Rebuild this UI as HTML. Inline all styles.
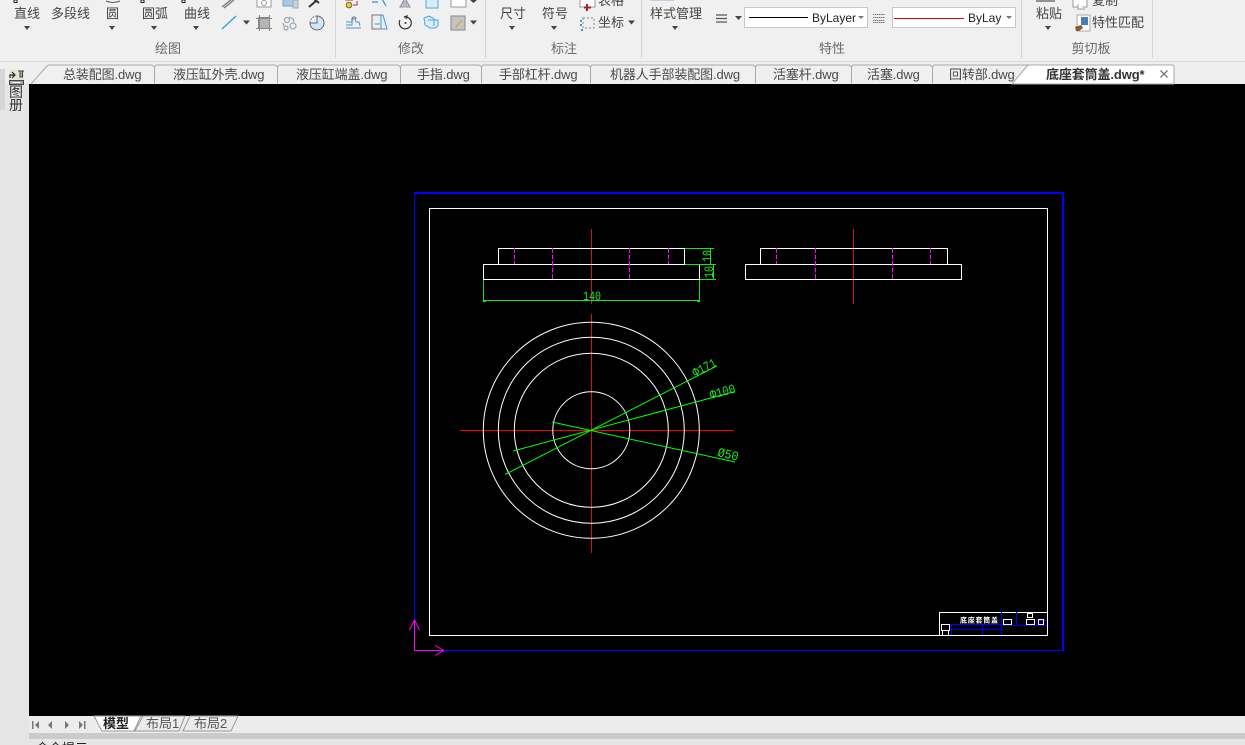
<!DOCTYPE html>
<html><head><meta charset="utf-8">
<style>
html,body{margin:0;padding:0;width:1245px;height:745px;overflow:hidden;background:#e6e6e6}
body{position:relative;font-family:"Liberation Sans","Noto Sans CJK SC",sans-serif;font-size:13px;color:#444}
.t{position:absolute;height:20px;line-height:20px;white-space:nowrap}
.c{transform:translateX(-50%)}
.lab{color:#6a6a6a}
.ar{position:absolute;width:0;height:0;border-left:3.5px solid transparent;border-right:3.5px solid transparent;border-top:4px solid #444}
.tab{position:absolute;top:74px;margin-top:-9.5px;height:20px;line-height:20px;white-space:nowrap;color:#4a4a4a;letter-spacing:-.12px}
svg{position:absolute;left:0;top:0}
.dd{position:absolute;top:7px;height:19px;background:#fff;border:1px solid #c8c8c8;overflow:hidden}
.b{position:absolute;background:#0000ff}
</style></head><body>
<div style="position:absolute;left:0;top:0;width:1245px;height:61px;background:#f0f0f0"></div>
<div style="position:absolute;left:0;top:61px;width:1245px;height:23px;background:#efefef;border-top:1px solid #dcdcdc;box-sizing:border-box"></div>
<div style="position:absolute;left:0;top:69px;width:5px;height:41px;background:#d6d6d6"></div>
<div style="position:absolute;left:29px;top:84px;width:1216px;height:632px;background:#000"></div>
<div style="position:absolute;left:29px;top:716px;width:1216px;height:17px;background:#ececec"></div>
<div style="position:absolute;left:29px;top:733px;width:1216px;height:6px;background:#cbcbcb"></div>

<!-- ribbon dividers and icons -->
<svg width="1245" height="120" viewBox="0 0 1245 120" fill="none">
<g stroke="#d4d4d4"><path d="M335.500 0V58M485.500 0V58M641.500 0V58M1021.500 0V58M1152.500 0V58"/></g>
<g fill="#fff" stroke="#222"><rect x="14" y="0" width="3" height="2.500"/><rect x="141" y="0" width="3" height="2.500"/><rect x="182" y="0" width="3" height="2.500"/></g>
<path d="M106 1Q113 4 120 1" stroke="#555"/>
<path d="M222 7L232 -1M224 8L234 0" stroke="#777" stroke-width="1.300"/>
<path d="M222 29L236 16" stroke="#3aa5e0" stroke-width="1.500"/>
<path d="M243 20.500h7l-3.500 4z" fill="#444"/>
<rect x="258.500" y="17.500" width="11" height="11" fill="#b5b5b5" stroke="#888"/>
<path d="M256 18.500h16M256 28.500h16M259.500 15v16M269.500 15v16" stroke="#888"/>
<rect x="257" y="-2" width="14" height="9" fill="#fff" stroke="#999"/><circle cx="264" cy="3" r="2.500" stroke="#999"/>
<rect x="283" y="-2" width="14" height="8" fill="#a9c8e6" stroke="#7a9fc5"/><rect x="293" y="0" width="5" height="8" fill="#c9d3dc" stroke="#9aaaba"/>
<path d="M309 7L316 1M314 -1L319 3" stroke="#333" stroke-width="2"/>
<g stroke="#9aa4ae" stroke-width="1.200"><circle cx="287" cy="20" r="2.500"/><circle cx="293" cy="26" r="3"/><circle cx="286" cy="28" r="2"/><path d="M289 17l4 2 1 3M283 23l1 3"/></g>
<path d="M317 16a7 7 0 1 1-7 7h7z" fill="#cfe8f8" stroke="#666"/><path d="M310 23a7 7 0 0 1 7-7" stroke="#777" stroke-dasharray="2 1"/>
<circle cx="349" cy="5" r="2.800" fill="#f2d500" stroke="#666"/><path d="M353 5h4V1M345 0h8" stroke="#a04030"/>
<path d="M372 2h6M382 -1l4 7" stroke="#3a8fd0" stroke-width="1.200"/>
<path d="M400 7l4-7v7zM406 0l4 7h-4z" fill="#c9d3dc" stroke="#889"/>
<path d="M346 28h15M346 25h6v-6h3l1 3h3l1 4M346 22h5" stroke="#4a95d0"/><path d="M352 23v-4a2 2 0 0 1 4 0" stroke="#666"/>
<rect x="372" y="15" width="9" height="14" fill="#ececec" stroke="#777"/><path d="M381 15h2l4 14h-6zM375 24h5" stroke="#4a95d0" fill="#e3f2fb"/>
<path d="M400 20a6 6 0 1 0 4-3l3-1-1 3" stroke="#333" stroke-width="1.200"/><circle cx="405.500" cy="23" r="1" fill="#333"/>
<path d="M424 18l5-2 4 2 2 2h3v6l-3 2-5 0-5-3zM428 20h6v6" stroke="#4aa5e0" fill="#dcedf8"/>
<rect x="426" y="-2" width="12" height="10" fill="#d7ecfa" stroke="#5aa5da"/>
<rect x="451" y="-2" width="15" height="9" fill="#fff" stroke="#999"/>
<rect x="451" y="16" width="14" height="14" fill="#c4c4c4" stroke="#888"/><path d="M455 27l6-7 1 1-6 7z" fill="#e8a03a"/>
<path d="M470 20.500h7l-3.500 4z" fill="#444"/><path d="M470 0h7l-3.500 3z" fill="#444"/>
<rect x="580" y="-2" width="15" height="9" fill="#fff" stroke="#999"/><path d="M587 4v7M584 7.500h7" stroke="#b02020" stroke-width="2"/>
<rect x="583" y="18" width="11" height="10" stroke="#888" stroke-dasharray="2 2"/><path d="M581 20v8M581 30h2" stroke="#3a95d0" stroke-width="2" stroke-dasharray="2 2"/>
<path d="M628 20.500h7l-3.500 4z" fill="#444"/>
<path d="M716 15h11M716 18.500h11M716 22h11" stroke="#555" stroke-width="1.200"/>
<path d="M735 16h7l-3.500 4z" fill="#444"/>
<g stroke="#777"><path d="M873 14.500h12M873 17.500h12M873 20.500h12M873 22.500h12" stroke-dasharray="1.500 .5"/></g>
<path d="M650 0h24" stroke="#8fb0cc"/>
<path d="M1036 1h19" stroke="#333"/><rect x="1073" y="-2" width="14" height="9" fill="#fff" stroke="#999"/><path d="M1078 4v5h7" stroke="#999" fill="#fff"/>
<rect x="1077" y="15" width="13" height="16" fill="#fff" stroke="#aaa"/><rect x="1081" y="17" width="7" height="8" fill="#4a7db5"/><path d="M1075 27l6-2 2 3-4 3h-3z" fill="#8a5a2a"/>
<!-- sidebar icon -->
<rect x="9" y="70" width="15" height="15" fill="#e4e4da"/>
<path d="M10 78v-3h4M12 72l3 3-3 3" stroke="#222" stroke-width="1.200"/>
<path d="M18 71h6M20 71h2.500v6H20z" stroke="#444" fill="#aaa"/>
<rect x="9.500" y="80.500" width="14" height="4" fill="#aaa" stroke="#444"/><path d="M12 82.500h8" stroke="#fff"/>
<!-- tabs outline -->
<g stroke="#a8a8a8" fill="#f0f0f0">
<path d="M31 84L47 66Q48 65 50 65H152L154.500 67V83.500"/>
<path d="M154.500 67L156 65H275L277.500 67V83.500"/>
<path d="M277.500 67L279 65H398L400.500 67V83.500"/>
<path d="M400.500 67L402 65H479L481.500 67V83.500"/>
<path d="M481.500 67L483 65H588L590.500 67V83.500"/>
<path d="M590.500 67L592 65H753L755.500 67V83.500"/>
<path d="M755.500 67L757 65H849L851.500 67V83.500"/>
<path d="M851.500 67L853 65H930L932.500 67V83.500"/>
<path d="M932.500 67L934 65H1030"/>
</g>
<path d="M1012 84L1027 66Q1028 65 1030 65H1172Q1174 65 1174 67V84Z" fill="#fff" stroke="#a8a8a8"/>
<path d="M1160.500 70.500l7 7M1167.500 70.500l-7 7" stroke="#777" stroke-width="1.300"/>
</svg>

<!-- ribbon text -->
<span class="t" style="left:14px;top:3.500px">直线</span>
<span class="t" style="left:51px;top:3.500px">多段线</span>
<span class="t" style="left:106px;top:3.500px">圆</span>
<span class="t" style="left:142px;top:3.500px">圆弧</span>
<span class="t" style="left:184px;top:3.500px">曲线</span>
<span class="t" style="left:500px;top:3.500px">尺寸</span>
<span class="t" style="left:542px;top:3.500px">符号</span>
<span class="t" style="left:598px;top:12.500px">坐标</span>
<span class="t" style="left:598px;top:-9px">表格</span>
<span class="t" style="left:650px;top:3.500px">样式管理</span>
<span class="t" style="left:1036px;top:3.500px">粘贴</span>
<span class="t" style="left:1092px;top:-9px">复制</span>
<span class="t" style="left:1092px;top:12.500px">特性匹配</span>
<i class="ar" style="left:24px;top:26px"></i><i class="ar" style="left:109px;top:26px"></i><i class="ar" style="left:151px;top:26px"></i><i class="ar" style="left:193px;top:26px"></i><i class="ar" style="left:509px;top:26px"></i><i class="ar" style="left:551px;top:26px"></i><i class="ar" style="left:672px;top:26px"></i><i class="ar" style="left:1045px;top:26px"></i>
<span class="t c lab" style="left:168px;top:39px">绘图</span>
<span class="t c lab" style="left:411px;top:39px">修改</span>
<span class="t c lab" style="left:564px;top:39px">标注</span>
<span class="t c lab" style="left:832px;top:39px">特性</span>
<span class="t c lab" style="left:1091px;top:39px">剪切板</span>

<div class="dd" style="left:744px;width:122px">
  <div style="position:absolute;left:4px;top:9px;width:59px;height:1px;background:#000"></div>
  <span class="t" style="left:67px;top:0;font-size:12px;color:#222">ByLayer</span>
  <i style="position:absolute;left:113px;top:8px;border-left:3px solid transparent;border-right:3px solid transparent;border-top:3px solid #777"></i>
</div>
<div class="dd" style="left:892px;width:122px">
  <div style="position:absolute;left:1px;top:10px;width:70px;height:1px;background:#e00000"></div>
  <div style="position:absolute;left:75px;top:0;width:33px;height:19px;overflow:hidden"><span class="t" style="left:0;top:0;font-size:12px;color:#222">ByLayer</span></div>
  <i style="position:absolute;left:113px;top:8px;border-left:3px solid transparent;border-right:3px solid transparent;border-top:3px solid #777"></i>
</div>

<!-- tabs text -->
<span class="tab" style="left:63px">总装配图.dwg</span>
<span class="tab" style="left:173px">液压缸外壳.dwg</span>
<span class="tab" style="left:296px">液压缸端盖.dwg</span>
<span class="tab" style="left:417px">手指.dwg</span>
<span class="tab" style="left:499px">手部杠杆.dwg</span>
<span class="tab" style="left:610px">机器人手部装配图.dwg</span>
<span class="tab" style="left:773px">活塞杆.dwg</span>
<span class="tab" style="left:867px">活塞.dwg</span>
<span class="tab" style="left:949px">回转部.dwg</span>
<span class="tab" style="left:1046px;font-weight:bold;color:#333">底座套筒盖.dwg*</span>

<!-- sidebar text -->
<span class="t" style="left:9px;top:84px;font-size:14px;line-height:16px;height:16px;color:#333">图</span>
<span class="t" style="left:9px;top:97px;font-size:14px;line-height:16px;height:16px;color:#333">册</span>

<!-- blue frame -->
<div class="b" style="left:414px;top:192px;width:650px;height:2px"></div>
<div class="b" style="left:414px;top:650px;width:650px;height:1px"></div>
<div class="b" style="left:414px;top:192px;width:1px;height:459px"></div>
<div class="b" style="left:1062px;top:192px;width:2px;height:459px"></div>

<!-- drawing -->
<svg width="1245" height="745" viewBox="0 0 1245 745" fill="none" shape-rendering="crispEdges">
<rect x="429.500" y="208.500" width="618" height="427" stroke="#fff"/>

<g stroke="#d01515">
<path d="M591.500 229V304M853.500 229V304M591.500 314V553"/>
<path d="M460 430.500H734" stroke="#ff0000"/>
</g>

<g stroke="#fff">
<rect x="498.500" y="248.500" width="186" height="16"/>
<rect x="483.500" y="264.500" width="216" height="15"/>
<rect x="760.500" y="248.500" width="187" height="16"/>
<rect x="745.500" y="264.500" width="216" height="15"/>
</g>
<g stroke="#ff00ff" stroke-dasharray="5 1.500">
<path d="M514.500 248V264M668.500 248V264M552.500 248V279M629.500 248V279M776.500 248V264M930.500 248V264M815.500 248V279M892.500 248V279"/>
</g>
<g stroke="#1fe01f">
<path d="M685 248.500H714M685 264.500H716M700 279.500H716M710.500 248V265M713.500 264V280"/>
<path d="M483.500 280V302M699.500 280V302M484 300.500H699M483 301.500h3M697 301.500h3"/>
</g>
<g shape-rendering="auto" stroke="#fff" stroke-width="1">
<circle cx="591.300" cy="430.300" r="108"/>
<circle cx="591.300" cy="430.300" r="93"/>
<circle cx="591.300" cy="430.300" r="77"/>
<circle cx="591.300" cy="430.300" r="38.500"/>
</g>
<g shape-rendering="auto" stroke="#00ff00" stroke-width="1">
<path d="M505 474.500L716.700 366"/>
<path d="M513 451L735 391.500"/>
<path d="M552 422L735 462"/>
</g>
<g shape-rendering="auto" fill="#22e822" font-family="Liberation Mono,monospace" font-size="13">
<text x="583" y="300" textLength="18" lengthAdjust="spacingAndGlyphs">140</text>
<text transform="translate(711 262) rotate(-90)" textLength="12" lengthAdjust="spacingAndGlyphs">10</text>
<text transform="translate(713 278) rotate(-90)" textLength="12" lengthAdjust="spacingAndGlyphs">10</text>
<text transform="translate(695 377) rotate(-27)" textLength="25" lengthAdjust="spacingAndGlyphs">Φ171</text>
<text transform="translate(711 399) rotate(-15)" textLength="26" lengthAdjust="spacingAndGlyphs">Φ100</text>
<text transform="translate(717 456) rotate(13)" textLength="21" lengthAdjust="spacingAndGlyphs">Ø50</text>
</g>
<!-- title block -->
<rect x="939.500" y="612.500" width="108" height="23" stroke="#fff"/>
<g stroke="#0000ff">
<path d="M950 624.500H1002M952 629.500H1002M951.500 624V635M982.500 624V635M1001.500 612V635M1016.500 612V625M1003 625.500H1047M1036.500 619V625M1047 620.500H1039"/>
</g>
<g stroke="#fff">
<rect x="941.500" y="624.500" width="8" height="6"/><rect x="942.500" y="630.500" width="6" height="5"/>
<rect x="1003.500" y="619.500" width="8" height="5"/><rect x="1027.500" y="613.500" width="5" height="4"/>
<rect x="1026.500" y="619.500" width="8" height="5"/><rect x="1038.500" y="619.500" width="5" height="5"/>
</g>
<text x="960" y="622.500" font-family="Liberation Sans,Noto Sans CJK SC,sans-serif" font-size="7" font-weight="bold" fill="#fff" shape-rendering="auto" textLength="38">底座套筒盖</text>
<!-- UCS -->
<g stroke="#ff00ff">
<path d="M414.500 620V650.500H444"/>
<g shape-rendering="auto"><path d="M414.500 620L409.500 630M414.500 620L419.500 630M444 650.500L435 645.500M444 650.500L435 655.500"/></g>
</g>
</svg>

<!-- layout tabs -->
<svg width="260" height="745" viewBox="0 0 260 745" fill="none">
<g fill="#777"><path d="M32 721h1.500v8H32zM39 721v8l-4-4zM52 721v8l-4-4zM65 721v8l4-4zM79 721v8l4-4zM84 721h1.500v8H84z"/></g>
<path d="M94 716L102 731H134L141 716Z" fill="#fff" stroke="#999"/>
<path d="M135 731L143 716H185L179 731Z" fill="#ececec" stroke="#999"/>
<path d="M183 731L190 716H238L231 731Z" fill="#ececec" stroke="#999"/>
</svg>
<span class="t" style="left:103px;top:714px;font-weight:bold;color:#222">模型</span>
<span class="t" style="left:146px;top:714px;color:#555">布局1</span>
<span class="t" style="left:194px;top:714px;color:#555">布局2</span>
<span class="t" style="left:36px;top:739px;color:#222">命令提示</span>
</body></html>
